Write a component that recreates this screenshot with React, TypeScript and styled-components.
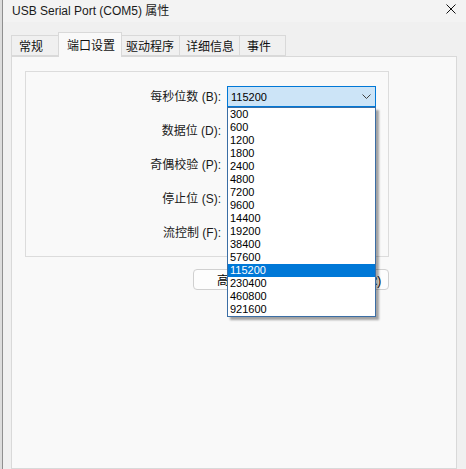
import { Fragment } from "react"
import { createGlobalStyle, styled } from "styled-components"

const GlobalStyle = createGlobalStyle`
  html, body {
    margin: 0;
    padding: 0;
    background: #f0f0f0;
  }
  body {
    font-family: "Liberation Sans", "Noto Sans CJK SC", sans-serif;
    font-size: 12px;
    color: #000;
  }
`

const Screen = styled.div`
  display: flex;
  width: 466px;
  height: 469px;
  overflow: hidden;
`

const BackStrip = styled.div`
  width: 2px;
  background: #dcdcdc;
  border-right: 1px solid #8f8f8f;
`

const Dialog = styled.div`
  flex: 1;
  display: flex;
  flex-direction: column;
  background: #f0f0f0;
`

const TitleBar = styled.div`
  height: 18px;
  padding: 0 10px 4px 9px;
  display: flex;
  align-items: center;
  justify-content: space-between;
  background: #f3f3f3;
  font-size: 12px;
  color: #1a1a1a;
`

const TabStrip = styled.div`
  height: 34px;
  padding-left: 8px;
  display: flex;
  align-items: flex-end;
`

const Tab = styled.div<{ $w: number; $pl: number; $active?: boolean }>`
  box-sizing: border-box;
  width: ${(p) => p.$w}px;
  height: ${(p) => (p.$active ? 25 : 21)}px;
  margin-bottom: ${(p) => (p.$active ? -1 : 0)}px;
  margin-right: -1px;
  padding-left: ${(p) => p.$pl}px;
  padding-bottom: ${(p) => (p.$active ? 2 : 0)}px;
  display: flex;
  align-items: center;
  border: 1px solid #d9d9d9;
  border-bottom: ${(p) => (p.$active ? "none" : "1px solid #d9d9d9")};
  background: ${(p) => (p.$active ? "#f9f9f9" : "#f0f0f0")};
  position: relative;
  z-index: ${(p) => (p.$active ? 2 : 1)};
  font-size: 12px;
  color: #111;
`

const Panel = styled.div`
  flex: 1;
  width: 446px;
  box-sizing: border-box;
  margin-left: 8px;
  padding: 14px 13px;
  border: 1px solid #d9d9d9;
  background: #f9f9f9;
`

const GroupBox = styled.div`
  width: 364px;
  box-sizing: border-box;
  padding: 14px 12px 13px 0;
  border: 1px solid #dcdcdc;
  display: grid;
  grid-template-columns: 195px 149px;
  column-gap: 6px;
  row-gap: 13px;
`

const Label = styled.div`
  align-self: center;
  text-align: right;
  font-size: 12px;
  color: #1a1a1a;
  line-height: 14px;
`

const ComboWrap = styled.div`
  position: relative;
`

const Combo = styled.div<{ $focused?: boolean }>`
  box-sizing: border-box;
  height: 21px;
  padding: 0 4px 0 3px;
  display: flex;
  align-items: center;
  justify-content: space-between;
  border: 1px solid ${(p) => (p.$focused ? "#0078d7" : "#cccccc")};
  background: ${(p) => (p.$focused ? "#cce4f7" : "#ffffff")};
  font-size: 11px;
`

const DropList = styled.div`
  position: absolute;
  top: 100%;
  left: 0;
  width: 100%;
  box-sizing: border-box;
  border: 1px solid #3b6ea5;
  background: #ffffff;
  box-shadow: 3px 3px 2px rgba(0, 0, 0, 0.35);
  z-index: 5;
`

const Option = styled.div<{ $selected?: boolean }>`
  height: 13px;
  line-height: 13px;
  padding-left: 2px;
  font-size: 11px;
  background: ${(p) => (p.$selected ? "#0078d7" : "transparent")};
  color: ${(p) => (p.$selected ? "#ffffff" : "#000000")};
`

const ButtonRow = styled.div`
  width: 364px;
  margin-top: 12px;
  display: flex;
  justify-content: flex-end;
  gap: 6px;
`

const Button = styled.div<{ $w: number }>`
  box-sizing: border-box;
  width: ${(p) => p.$w}px;
  height: 21px;
  display: flex;
  align-items: center;
  justify-content: center;
  border: 1px solid #d0d0d0;
  border-radius: 4px;
  background: #fdfdfd;
  font-size: 12px;
`

const Chevron = () => (
  <svg width="9" height="5" viewBox="0 0 9 5">
    <path d="M0.5 0.5 L4.5 4.5 L8.5 0.5" fill="none" stroke="#404040" strokeWidth="1" />
  </svg>
)

const CloseIcon = () => (
  <svg width="10" height="10" viewBox="0 0 10 10">
    <path d="M0.5 0.5 L9.5 9.5 M9.5 0.5 L0.5 9.5" fill="none" stroke="#111" strokeWidth="1" />
  </svg>
)

const tabs = [
  { text: "常规", w: 48, pl: 7 },
  { text: "端口设置", w: 64, pl: 8, active: true },
  { text: "驱动程序", w: 59, pl: 4 },
  { text: "详细信息", w: 61, pl: 6 },
  { text: "事件", w: 47, pl: 7 },
]

const rates = [
  "300", "600", "1200", "1800", "2400", "4800", "7200", "9600",
  "14400", "19200", "38400", "57600", "115200", "230400", "460800", "921600",
]

// only the open combo shows its value; the others sit under the list
const fields = [
  { label: "每秒位数 (B):", value: "115200" },
  { label: "数据位 (D):", value: "" },
  { label: "奇偶校验 (P):", value: "" },
  { label: "停止位 (S):", value: "" },
  { label: "流控制 (F):", value: "" },
]

export default function App() {
  return (
    <Screen>
      <GlobalStyle />
      <BackStrip />
      <Dialog>
        <TitleBar>
          <span>USB Serial Port (COM5) 属性</span>
          <CloseIcon />
        </TitleBar>
        <TabStrip>
          {tabs.map((t) => (
            <Tab key={t.text} $w={t.w} $pl={t.pl} $active={t.active}>
              {t.text}
            </Tab>
          ))}
        </TabStrip>
        <Panel>
          <GroupBox>
            {fields.map((f, i) => (
              <Fragment key={f.label}>
                <Label>{f.label}</Label>
                <ComboWrap>
                  <Combo $focused={i === 0}>
                    <span>{f.value}</span>
                    <Chevron />
                  </Combo>
                  {i === 0 && (
                    <DropList>
                      {rates.map((r) => (
                        <Option key={r} $selected={r === "115200"}>
                          {r}
                        </Option>
                      ))}
                    </DropList>
                  )}
                </ComboWrap>
              </Fragment>
            ))}
          </GroupBox>
          <ButtonRow>
            <Button $w={98}>高级(A)...</Button>
            <Button $w={92}>还原默认值(R)</Button>
          </ButtonRow>
        </Panel>
      </Dialog>
    </Screen>
  )
}
